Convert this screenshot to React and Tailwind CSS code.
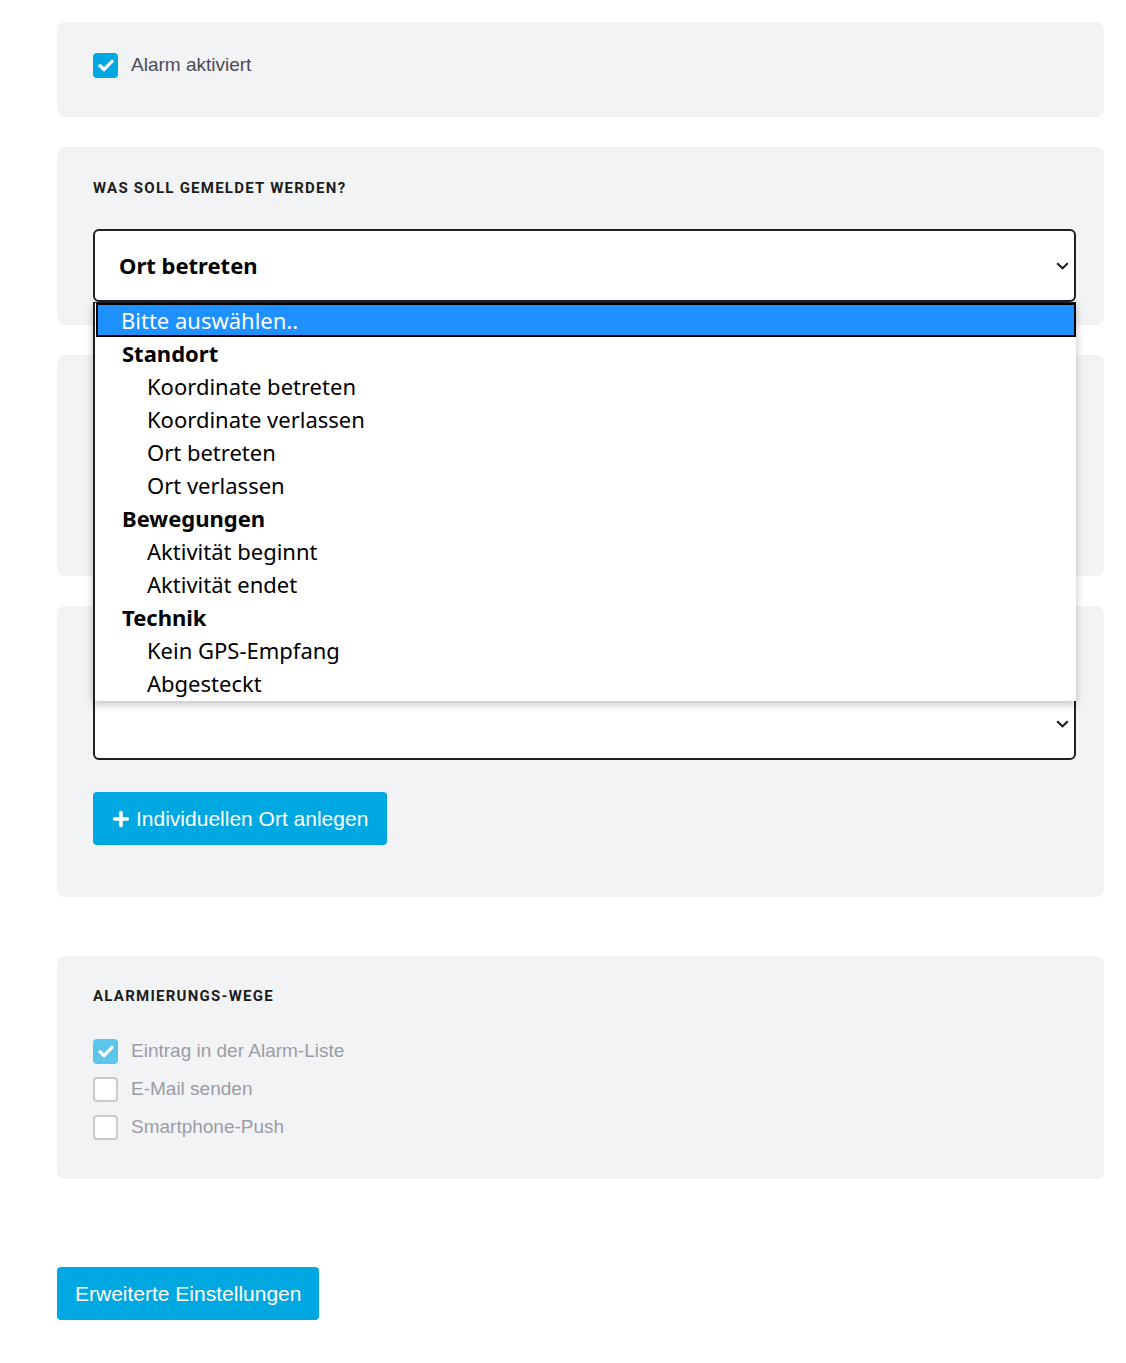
import { Plus } from 'lucide-react'

const options = [
  { label: 'Standort', items: ['Koordinate betreten', 'Koordinate verlassen', 'Ort betreten', 'Ort verlassen'] },
  { label: 'Bewegungen', items: ['Aktivität beginnt', 'Aktivität endet'] },
  { label: 'Technik', items: ['Kein GPS-Empfang', 'Abgesteckt'] },
]

function Chevron() {
  return (
    <svg width="13" height="8" viewBox="0 0 13 8" className="absolute right-[5px] top-1/2 -translate-y-1/2">
      <path d="M1.2 1.2 L6.5 6.3 L11.8 1.2" fill="none" stroke="#1a1a1a" strokeWidth="2" />
    </svg>
  )
}

function Box({ checked, muted }) {
  if (checked) {
    return (
      <span className={`flex h-[25px] w-[25px] items-center justify-center rounded-[4px] ${muted ? 'bg-[#5cc5ec]' : 'bg-[#00a8e2]'}`}>
        <svg width="16" height="13" viewBox="0 0 16 13">
          <path d="M2 6.8 L6 10.6 L14 2.4" fill="none" stroke="white" strokeWidth="3.4" strokeLinecap="round" strokeLinejoin="round" />
        </svg>
      </span>
    )
  }
  return <span className="h-[25px] w-[25px] rounded-[4px] border-2 border-[#c9cace] bg-white" />
}

function Label({ children }) {
  return (
    <div className="h-[20px] font-['Roboto',sans-serif] text-[15px] font-bold leading-[20px] tracking-[1.25px] text-[#1c1c1c]">
      {children}
    </div>
  )
}

function SelectBox({ children }) {
  return (
    <div className="relative h-[73px] w-full rounded-[6px] border-2 border-[#1f1f24] bg-white font-['Noto_Sans',sans-serif]">
      <div className="flex h-full items-center pl-[24px] text-[22px] font-bold text-black">{children}</div>
      <Chevron />
    </div>
  )
}

export default function App() {
  return (
    <div className="min-h-[1363px] bg-white pl-[57px] pr-[22px] pt-[22px] font-['Liberation_Sans',Arial,sans-serif]">
      <div className="rounded-[8px] bg-[#f2f3f5] pl-[36px] pt-[28px] pb-[36px]">
        <div className="flex h-[31px] items-center gap-[13px]">
          <Box checked />
          <span className="text-[19px] text-[#4b4b55]">Alarm aktiviert</span>
        </div>
      </div>

      <div className="mt-[30px] rounded-[8px] bg-[#f2f3f5] pl-[36px] pr-[28px] pt-[31px] pb-[23px]">
        <Label>WAS SOLL GEMELDET WERDEN?</Label>
        <div className="relative mt-[31px]">
          <SelectBox>Ort betreten</SelectBox>
          <div className="absolute left-0 right-0 top-[73px] z-10 border-l-2 border-t border-[#1f1f24] bg-white pb-[1px] font-['Noto_Sans',sans-serif] text-[22px] leading-[33px] text-black shadow-[0_3px_8px_rgba(0,0,0,0.25)]">
            <div className="ml-[1px] h-[34px] border-2 border-black bg-[#1e90ff] pl-[23px] leading-[31px] text-white">Bitte auswählen..</div>
            {options.map((g) => (
              <div key={g.label}>
                <div className="h-[33px] pl-[27px] font-bold">{g.label}</div>
                {g.items.map((it) => (
                  <div key={it} className="h-[33px] pl-[52px]">{it}</div>
                ))}
              </div>
            ))}
          </div>
        </div>
      </div>

      <div className="mt-[30px] h-[221px] rounded-[8px] bg-[#f2f3f5] pl-[36px] pr-[28px] pt-[81px]">
        <SelectBox>&nbsp;</SelectBox>
      </div>

      <div className="mt-[30px] rounded-[8px] bg-[#f2f3f5] pl-[36px] pr-[28px] pt-[81px] pb-[52px]">
        <SelectBox>&nbsp;</SelectBox>
        <button className="mt-[32px] flex h-[53px] items-center gap-[4px] rounded-[4px] bg-[#00a8e2] pl-[17px] pr-[19px] text-[21px] text-white">
          <Plus size={22} strokeWidth={4} />
          Individuellen Ort anlegen
        </button>
      </div>

      <div className="mt-[59px] rounded-[8px] bg-[#f2f3f5] pl-[36px] pt-[30px] pb-[36px]">
        <Label>ALARMIERUNGS-WEGE</Label>
        <div className="mt-[30px] flex flex-col gap-[7px]">
          {[
            ['Eintrag in der Alarm-Liste', true],
            ['E-Mail senden', false],
            ['Smartphone-Push', false],
          ].map(([t, c]) => (
            <div key={t} className="flex h-[31px] items-center gap-[13px]">
              <Box checked={c} muted />
              <span className="text-[19px] text-[#9b9ca5]">{t}</span>
            </div>
          ))}
        </div>
      </div>

      <button className="mt-[88px] h-[53px] rounded-[4px] bg-[#00a8e2] px-[18px] text-[21px] text-white">
        Erweiterte Einstellungen
      </button>
    </div>
  )
}
